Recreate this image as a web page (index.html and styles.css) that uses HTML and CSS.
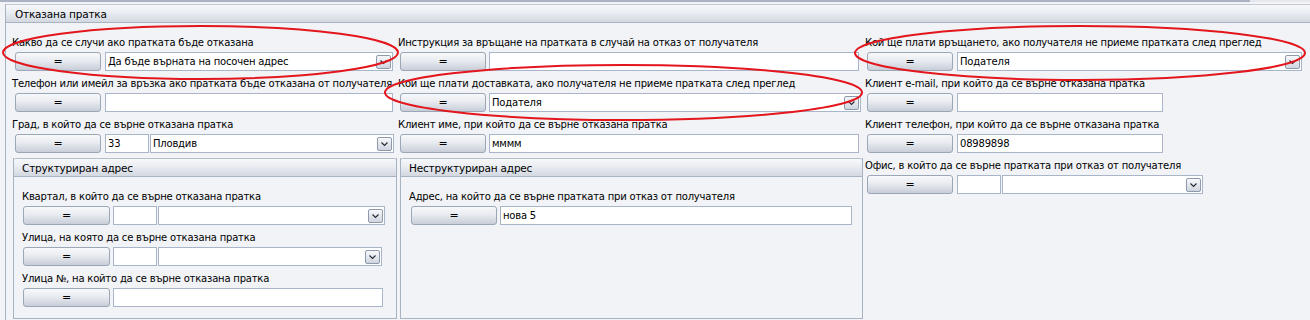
FILE: index.html
```html
<!DOCTYPE html>
<html lang="bg">
<head>
<meta charset="utf-8">
<title>Отказана пратка</title>
<link rel="stylesheet" href="styles.css">
</head>
<body>
<div class="topbar"></div>
<div class="panel">
  <div class="panel-head">Отказана пратка</div>
  <div class="panel-body">
    <div class="col col1">
      <div class="field">
        <div class="label">Какво да се случи ако пратката бъде отказана</div>
        <div class="controls">
          <button class="eq">=</button>
          <div class="select w288"><span>Да бъде върната на посочен адрес</span><i class="arrow"></i></div>
        </div>
      </div>
      <div class="field">
        <div class="label">Телефон или имейл за връзка ако пратката бъде отказана от получателя</div>
        <div class="controls">
          <button class="eq">=</button>
          <div class="input w288"></div>
        </div>
      </div>
      <div class="field">
        <div class="label">Град, в който да се върне отказана пратка</div>
        <div class="controls">
          <button class="eq">=</button>
          <div class="input small">33</div>
          <div class="select w244"><span>Пловдив</span><i class="arrow"></i></div>
        </div>
      </div>
      <div class="subpanel sub1">
        <div class="sub-head">Структуриран адрес</div>
        <div class="sub-body">
          <div class="field">
            <div class="label">Квартал, в който да се върне отказана пратка</div>
            <div class="controls">
              <button class="eq">=</button>
              <div class="input small"></div>
              <div class="select w227"><span></span><i class="arrow"></i></div>
            </div>
          </div>
          <div class="field">
            <div class="label">Улица, на която да се върне отказана пратка</div>
            <div class="controls">
              <button class="eq">=</button>
              <div class="input small"></div>
              <div class="select w224"><span></span><i class="arrow"></i></div>
            </div>
          </div>
          <div class="field">
            <div class="label">Улица №, на който да се върне отказана пратка</div>
            <div class="controls">
              <button class="eq">=</button>
              <div class="input w270"></div>
            </div>
          </div>
        </div>
      </div>
    </div>

    <div class="col col2">
      <div class="field">
        <div class="label">Инструкция за връщане на пратката в случай на отказ от получателя</div>
        <div class="controls">
          <button class="eq">=</button>
          <div class="input w370"></div>
        </div>
      </div>
      <div class="field">
        <div class="label">Кой ще плати доставката, ако получателя не приеме пратката след преглед</div>
        <div class="controls">
          <button class="eq">=</button>
          <div class="select w372"><span>Подателя</span><i class="arrow"></i></div>
        </div>
      </div>
      <div class="field">
        <div class="label">Клиент име, при който да се върне отказана пратка</div>
        <div class="controls">
          <button class="eq">=</button>
          <div class="input w370">мммм</div>
        </div>
      </div>
      <div class="subpanel sub2">
        <div class="sub-head">Неструктуриран адрес</div>
        <div class="sub-body">
          <div class="field">
            <div class="label">Адрес, на който да се върне пратката при отказ от получателя</div>
            <div class="controls">
              <button class="eq">=</button>
              <div class="input w352">нова 5</div>
            </div>
          </div>
        </div>
      </div>
    </div>

    <div class="col col3">
      <div class="field">
        <div class="label">Кой ще плати връщането, ако получателя не приеме пратката след преглед</div>
        <div class="controls">
          <button class="eq">=</button>
          <div class="select w345"><span>Подателя</span><i class="arrow"></i></div>
        </div>
      </div>
      <div class="field">
        <div class="label">Клиент e-mail, при който да се върне отказана пратка</div>
        <div class="controls">
          <button class="eq">=</button>
          <div class="input w206"></div>
        </div>
      </div>
      <div class="field">
        <div class="label">Клиент телефон, при който да се върне отказана пратка</div>
        <div class="controls">
          <button class="eq">=</button>
          <div class="input w206">08989898</div>
        </div>
      </div>
      <div class="field">
        <div class="label">Офис, в който да се върне пратката при отказ от получателя</div>
        <div class="controls">
          <button class="eq">=</button>
          <div class="input small"></div>
          <div class="select w201"><span></span><i class="arrow"></i></div>
        </div>
      </div>
    </div>
  </div>
</div>

<svg class="annot" width="1310" height="320" viewBox="0 0 1310 320" aria-hidden="true">
  <ellipse cx="200.5" cy="52.5" rx="197.5" ry="26.5"/>
  <ellipse cx="623.5" cy="92.5" rx="238.5" ry="27.5"/>
  <ellipse cx="1080" cy="53" rx="225" ry="27"/>
</svg>
</body>
</html>
```

FILE: styles.css
```css
* { box-sizing: border-box; }

html, body {
  margin: 0;
  padding: 0;
}

body {
  width: 1310px;
  height: 320px;
  overflow: hidden;
  background: #f1f3f6;
  font-family: "DejaVu Sans", "Liberation Sans", sans-serif;
  font-size: 10px;
  letter-spacing: -0.2px;
  color: #000;
  position: relative;
}

.topbar {
  height: 2px;
  margin-bottom: 2px;
  background: linear-gradient(to right, #aab3c1 0, #aab3c1 1250px, #e4e7ec 1250px);
}

.panel {
  margin-left: 5px;
  border-left: 1px solid #a7b2c3;
  height: 316px;
}

.panel-head {
  height: 19px;
  line-height: 18px;
  padding-left: 9px;
  border-top: 1px solid #c3cad6;
  border-bottom: 1px solid #a7b2c3;
  background: linear-gradient(to bottom, #f7f8fa 0%, #e9ecf1 45%, #d3d8e1 100%);
  font-size: 10.5px;
}

.panel-body {
  display: flex;
  padding-top: 12px;
  padding-left: 6px;
}

.col1 { width: 386px; }
.col2 { width: 467px; }
.col3 { flex: 1; }

.field {
  margin-bottom: 5px;
}

.label {
  height: 16px;
  line-height: 16px;
  white-space: nowrap;
  margin-bottom: 1px;
}

.controls {
  display: flex;
  height: 19px;
  padding-left: 3px;
}

.col2 .controls,
.col3 .controls { padding-left: 2px; }

.eq {
  width: 86px;
  height: 19px;
  margin: 0 3px 0 0;
  padding: 0;
  border: 1px solid #9ba6b7;
  border-radius: 3px;
  background: linear-gradient(to bottom, #f8f9fb 0%, #e8ebf0 45%, #c8ced9 100%);
  font-family: "DejaVu Sans", sans-serif;
  font-size: 11px;
  line-height: 16px;
  color: #000;
}

.col1 > .field .eq,
.col3 .eq { margin-right: 4px; }

.input, .select {
  height: 19px;
  line-height: 17px;
  border: 1px solid #a9b6ca;
  background: #fff;
  padding-left: 2px;
  white-space: nowrap;
  overflow: hidden;
}

.select {
  display: flex;
  align-items: center;
  justify-content: space-between;
  padding-right: 1px;
}

.select span {
  flex: 1;
  overflow: hidden;
}

.arrow {
  display: block;
  width: 15px;
  height: 14px;
  border: 1px solid #8d99ad;
  border-radius: 2px;
  background:
    url("data:image/svg+xml,%3Csvg xmlns='http://www.w3.org/2000/svg' width='13' height='12'%3E%3Cpath d='M3.5 4.5 L6.5 7.5 L9.5 4.5' fill='none' stroke='%23222a36' stroke-width='1.1'/%3E%3C/svg%3E") center / 13px 12px no-repeat,
    linear-gradient(to bottom, #f8f9fb, #cfd5df);
  flex: none;
}

.small { width: 44px; margin-right: 1px; }
.w288 { width: 288px; }
.w244 { width: 244px; }
.w227 { width: 227px; }
.w224 { width: 224px; }
.w270 { width: 270px; }
.w370 { width: 370px; }
.w372 { width: 372px; }
.w352 { width: 352px; }
.w345 { width: 345px; }
.w206 { width: 206px; }
.w201 { width: 201px; }

.subpanel {
  border-left: 1px solid #a7b2c3;
  border-right: 1px solid #a7b2c3;
  border-bottom: 1px solid #a7b2c3;
}

.sub1 { margin-left: 1px; width: 384px; }
.sub2 { margin-left: 2px; width: 463px; }

.sub-head {
  height: 19px;
  line-height: 18px;
  padding-left: 8px;
  border-top: 1px solid #b4bdca;
  border-bottom: 1px solid #a7b2c3;
  border-radius: 2px 2px 0 0;
  background: linear-gradient(to bottom, #f7f8fa 0%, #e9ecf1 45%, #d3d8e1 100%);
  font-size: 10.5px;
}

.sub-body {
  height: 141px;
  padding-top: 12px;
  padding-left: 8px;
}

.sub-body .controls { padding-left: 1px; }
.sub1 .eq { width: 87px; }

.sub2 .sub-body .controls { padding-left: 2px; }

.annot {
  position: absolute;
  left: 0;
  top: 0;
  pointer-events: none;
}

.annot ellipse {
  fill: none;
  stroke: #e3151d;
  stroke-width: 2;
}
```
